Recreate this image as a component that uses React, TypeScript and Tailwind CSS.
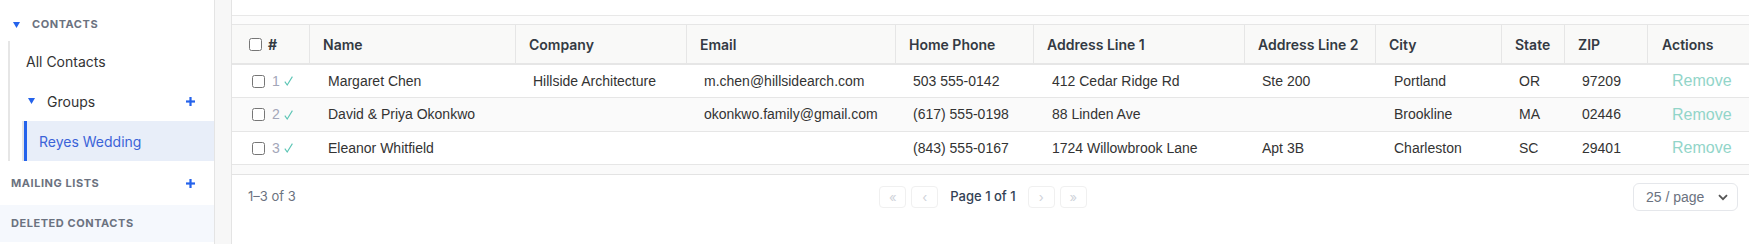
import React from "react";

const GRID =
  "grid grid-cols-[78px_206px_171px_209px_138px_211px_131px_126px_63px_83px_1fr]";

type Row = {
  n: number;
  name: string;
  company: string;
  email: string;
  phone: string;
  a1: string;
  a2: string;
  city: string;
  state: string;
  zip: string;
};

const rows: Row[] = [
  {
    n: 1,
    name: "Margaret Chen",
    company: "Hillside Architecture",
    email: "m.chen@hillsidearch.com",
    phone: "503 555-0142",
    a1: "412 Cedar Ridge Rd",
    a2: "Ste 200",
    city: "Portland",
    state: "OR",
    zip: "97209",
  },
  {
    n: 2,
    name: "David & Priya Okonkwo",
    company: "",
    email: "okonkwo.family@gmail.com",
    phone: "(617) 555-0198",
    a1: "88 Linden Ave",
    a2: "",
    city: "Brookline",
    state: "MA",
    zip: "02446",
  },
  {
    n: 3,
    name: "Eleanor Whitfield",
    company: "",
    email: "",
    phone: "(843) 555-0167",
    a1: "1724 Willowbrook Lane",
    a2: "Apt 3B",
    city: "Charleston",
    state: "SC",
    zip: "29401",
  },
];

const rowClasses = [
  "h-[33px] bg-white",
  "h-[34px] bg-[#fafafa]",
  "h-[33px] bg-white",
];

function Tri() {
  return (
    <svg width="7" height="6" viewBox="0 0 7 6" className="shrink-0">
      <polygon points="0,0 7,0 3.5,6" fill="#2563eb" />
    </svg>
  );
}

function Plus() {
  return (
    <svg width="9" height="9" viewBox="0 0 9 9" className="shrink-0">
      <rect x="3.4" y="0" width="2.2" height="9" fill="#2563eb" />
      <rect x="0" y="3.4" width="9" height="2.2" fill="#2563eb" />
    </svg>
  );
}

function Check() {
  return (
    <svg width="9" height="10" viewBox="0 0 9 10" className="shrink-0">
      <polyline
        points="0.8,5.6 3.2,9 8.4,0.6"
        fill="none"
        stroke="#5cc5b5"
        strokeWidth="1.1"
      />
    </svg>
  );
}

function PageBtn({ ch }: { ch: string }) {
  return (
    <div className="w-[27px] h-[22px] rounded-[4px] border border-[#f0f0f0] flex items-center justify-center text-[#cfd3da] text-[13px] leading-none">
      {ch}
    </div>
  );
}

export default function App() {
  const headers = [
    "Name",
    "Company",
    "Email",
    "Home Phone",
    "Address Line 1",
    "Address Line 2",
    "City",
    "State",
    "ZIP",
  ];
  return (
    <div className="flex w-[1749px] h-[244px] overflow-hidden bg-white">
      {/* Sidebar */}
      <aside className="w-[214px] shrink-0 bg-white font-['Inter',sans-serif]">
        <div className="mt-[8px] h-[33px] flex items-center pl-[13px] gap-[12px]">
          <Tri />
          <span className="text-[11px] font-bold tracking-[0.05em] text-[#6b7280]">
            CONTACTS
          </span>
        </div>
        <div className="ml-[8px] border-l-2 border-[#e6e6e6]">
          <div className="h-[40px] flex items-center pl-[16px] text-[14px] text-[#333]">
            All Contacts
          </div>
          <div className="h-[40px] flex items-center pl-[18px] pr-[19px]">
            <Tri />
            <span className="ml-[12px] text-[14px] text-[#333] flex-1">
              Groups
            </span>
            <Plus />
          </div>
          <div className="ml-[12px] border-l-2 border-[#e6e6e6]">
            <div className="h-[40px] flex items-center pl-[12px] border-l-[3px] border-[#2563eb] bg-[#e8eef9] text-[14px] text-[#3b63d8]">
              Reyes Wedding
            </div>
          </div>
        </div>
        <div className="h-[44px] flex items-center pl-[11px] pr-[19px]">
          <span className="flex-1 text-[11px] font-bold tracking-[0.05em] text-[#6b7280]">
            MAILING LISTS
          </span>
          <Plus />
        </div>
        <div className="h-[37px] flex items-center pl-[11px] bg-[#f5f8fd]">
          <span className="text-[11px] font-bold tracking-[0.05em] text-[#6b7280]">
            DELETED CONTACTS
          </span>
        </div>
      </aside>

      {/* gutter */}
      <div className="w-[18px] shrink-0 bg-[#f7f7f7] border-x border-[#e4e4e4]" />

      {/* Main */}
      <main className="flex-1 min-w-0 flex flex-col">
        <div className="h-[16px] border-b border-[#e8e8e8] bg-white" />
        <div className="h-[8px] bg-[#fcfcfc]" />

        {/* header */}
        <div
          className={`${GRID} h-[41px] border-t border-b-2 border-[#e6e6e6] bg-[#f9f9f8] font-['Inter',sans-serif] text-[14px] font-semibold text-[#343a43]`}
        >
          <div className="flex items-center pl-[17px] gap-[6px] border-r border-[#e6e6e6]">
            <input type="checkbox" className="m-0 w-[13px] h-[13px]" />
            <span className="font-bold">#</span>
          </div>
          {headers.map((h) => (
            <div
              key={h}
              className="flex items-center pl-[13px] border-r border-[#e6e6e6]"
            >
              {h}
            </div>
          ))}
          <div className="flex items-center pl-[14px]">Actions</div>
        </div>

        {/* rows */}
        {rows.map((r, i) => (
          <div
            key={r.n}
            className={`${GRID} ${rowClasses[i]} border-b border-[#e6e6e6] font-['Liberation_Sans',Arial,sans-serif] text-[14px] text-[#333]`}
          >
            <div className="flex items-center pl-[20px]">
              <input type="checkbox" className="m-0 w-[13px] h-[13px]" />
              <span className="ml-[7px] text-[#a3a6b8]">{r.n}</span>
              <span className="ml-[4px] flex items-center">
                <Check />
              </span>
            </div>
            <div className="flex items-center pl-[18px] whitespace-nowrap">
              {r.name}
            </div>
            <div className="flex items-center pl-[17px] whitespace-nowrap">
              {r.company}
            </div>
            <div className="flex items-center pl-[17px] whitespace-nowrap">
              {r.email}
            </div>
            <div className="flex items-center pl-[17px] whitespace-nowrap">
              {r.phone}
            </div>
            <div className="flex items-center pl-[18px] whitespace-nowrap">
              {r.a1}
            </div>
            <div className="flex items-center pl-[17px] whitespace-nowrap">
              {r.a2}
            </div>
            <div className="flex items-center pl-[18px] whitespace-nowrap">
              {r.city}
            </div>
            <div className="flex items-center pl-[17px] whitespace-nowrap">
              {r.state}
            </div>
            <div className="flex items-center pl-[17px] whitespace-nowrap">
              {r.zip}
            </div>
            <div className="flex items-center pl-[24px] text-[16px] text-[#92d5c9]">
              Remove
            </div>
          </div>
        ))}

        <div className="h-[10px] bg-[#fafafa] border-b border-[#e3e3e3]" />

        {/* footer */}
        <div className="h-[44px] grid grid-cols-[1fr_auto_1fr] items-center pl-[16px] pr-[11px] font-['Inter',sans-serif]">
          <div className="text-[13px] text-[#6b7280]">1–3 of 3</div>
          <div className="flex items-center mr-[20px]">
            <PageBtn ch="«" />
            <div className="ml-[5px]">
              <PageBtn ch="‹" />
            </div>
            <span className="mx-[12px] text-[13px] font-medium text-[#334155]">
              Page 1 of 1
            </span>
            <PageBtn ch="›" />
            <div className="ml-[5px]">
              <PageBtn ch="»" />
            </div>
          </div>
          <div className="flex justify-end">
            <div className="w-[105px] h-[28px] rounded-[6px] border border-[#e5e7eb] flex items-center pl-[12px] pr-[9px] font-['Liberation_Sans',Arial,sans-serif] text-[14px] text-[#6b7280]">
              <span className="flex-1">25 / page</span>
              <svg width="10" height="7" viewBox="0 0 10 7">
                <polyline
                  points="1,1.2 5,5.2 9,1.2"
                  fill="none"
                  stroke="#555"
                  strokeWidth="1.8"
                />
              </svg>
            </div>
          </div>
        </div>
      </main>
    </div>
  );
}
